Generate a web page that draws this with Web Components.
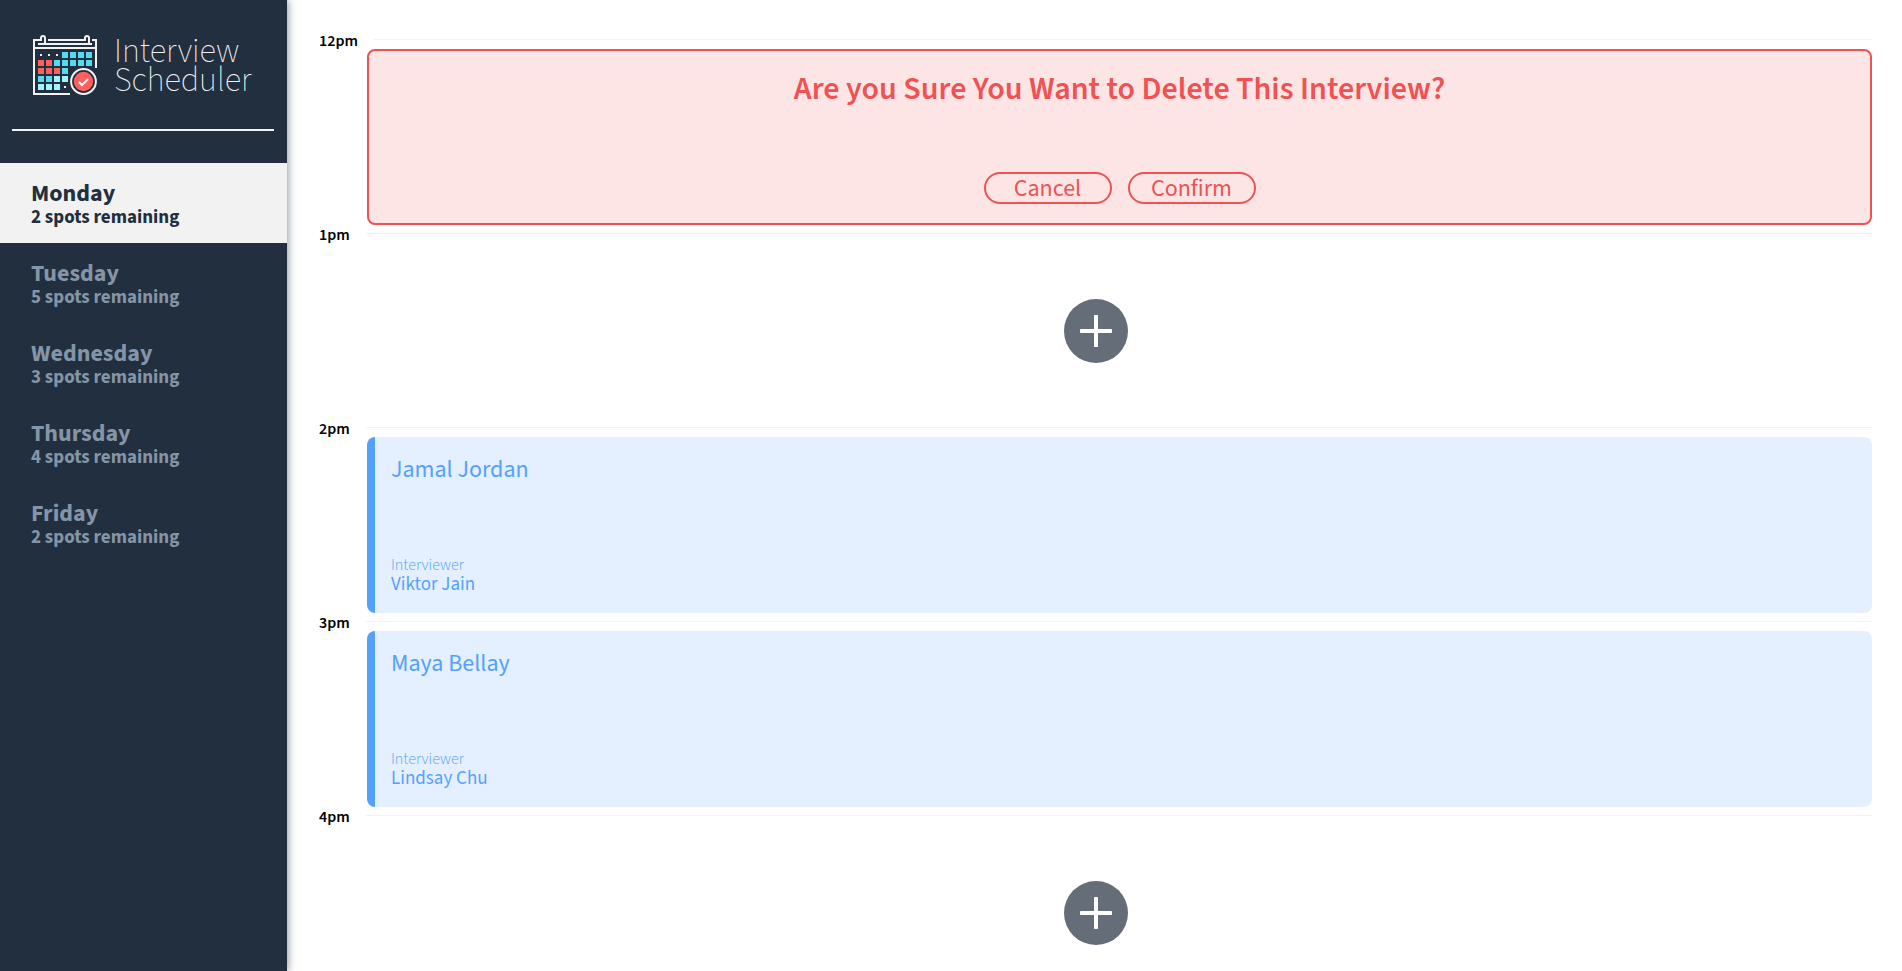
<!DOCTYPE html>
<html lang="en">
<head>
<meta charset="utf-8">
<title>Interview Scheduler</title>
<style>
body {
  margin: 0;
  background: #fff;
  color: #000;
  font-family: "Source Sans 3", "Noto Sans CJK SC", "Noto Sans", sans-serif;
  font-size: 16px;
}
</style>
</head>
<body>
<scheduler-app>
  <scheduler-sidebar slot="sidebar">
    <scheduler-logo slot="logo"></scheduler-logo>
    <day-item spots="2" selected>Monday</day-item>
    <day-item spots="5">Tuesday</day-item>
    <day-item spots="3">Wednesday</day-item>
    <day-item spots="4">Thursday</day-item>
    <day-item spots="2">Friday</day-item>
  </scheduler-sidebar>
  <appointment-slot time="12pm"><confirm-card>Are you Sure You Want to Delete This Interview?</confirm-card></appointment-slot>
  <appointment-slot time="1pm"><empty-slot></empty-slot></appointment-slot>
  <appointment-slot time="2pm"><interview-card interviewer="Viktor Jain">Jamal Jordan</interview-card></appointment-slot>
  <appointment-slot time="3pm"><interview-card interviewer="Lindsay Chu">Maya Bellay</interview-card></appointment-slot>
  <appointment-slot time="4pm"><empty-slot></empty-slot></appointment-slot>
</scheduler-app>

<script>
function define(name, render) {
  customElements.define(name, class extends HTMLElement {
    constructor() {
      super();
      this.attachShadow({ mode: 'open' });
    }
    connectedCallback() {
      this.shadowRoot.innerHTML = '<style>*{box-sizing:border-box}</style>' + render(this);
    }
  });
}

define('scheduler-app', () => `
  <style>
    :host { display: flex; height: 100vh; overflow: hidden; }
    main {
      flex: 1;
      min-width: 0;
      padding: 31px 30px 0 32px;
      overflow-y: auto;
      scrollbar-width: none;
    }
  </style>
  <slot name="sidebar"></slot>
  <main><slot></slot></main>`);

define('scheduler-sidebar', () => `
  <style>
    :host {
      display: block;
      flex: none;
      width: 287px;
      background: #222f3e;
      box-shadow: 1px 0 8px rgba(34, 47, 62, .5);
      z-index: 1;
    }
    hr { margin: 0 13px 32px 12px; border: 0; height: 2px; background: #f2f2f2; }
  </style>
  <slot name="logo"></slot>
  <hr>
  <nav><slot></slot></nav>`);

/* Calendar squares, one string per week: c cyan, p pale, r red, . dot */
const WEEKS = ['...cccc', 'rrccccc', 'rrrc', 'ccpp', 'ppp.'];
const FILL = { c: '#54dbf0', p: '#a5f2ff', r: '#ff5f5d' };
const squares = WEEKS.map((week, row) => [...week].map((k, col) => {
  const x = 6 + col * 8, y = 18 + row * 8;
  return k === '.'
    ? `<rect x="${x + 2}" y="${y + 2}" width="2" height="2" fill="#f2f2f2"/>`
    : `<rect x="${x}" y="${y}" width="6" height="6" fill="${FILL[k]}"/>`;
}).join('')).join('');

define('scheduler-logo', () => `
  <style>
    :host {
      display: flex;
      align-items: flex-start;
      gap: 16px;
      padding: 34px 32px 32px;
      color: #f2f2f2;
    }
    svg { flex: none; display: block; }
    div { padding-top: 3px; font-size: 34px; font-weight: 200; line-height: 29px; }
    span { display: block; }
  </style>
  <svg width="66" height="63" viewBox="0 0 66 63" aria-hidden="true">
    <g fill="none" stroke="#f2f2f2" stroke-width="2">
      <path d="M9 6H2V60H38M16 6H52M60 6H64V34M6 10H60M1 14H65"/>
      <path d="M9 7V4a2 2 0 0 1 4 0V9M53 7V4a2 2 0 0 1 4 0V9"/>
      <circle cx="51.5" cy="47.5" r="12.4"/>
    </g>
    ${squares}
    <circle cx="51.5" cy="47.5" r="9.7" fill="#ff5f5d"/>
    <path d="M47 48l3 3 6-6" fill="none" stroke="#fff" stroke-width="2"/>
  </svg>
  <div><span>Interview</span><span>Scheduler</span></div>`);

define('day-item', el => `
  <style>
    :host { display: block; }
    button {
      display: block;
      width: 100%;
      height: 80px;
      padding: 19px 31px 13px;
      border: 0;
      background: none;
      color: #8395a7;
      font: inherit;
      text-align: left;
      cursor: pointer;
    }
    :host([selected]) button { background: #f2f2f2; color: #222f3e; }
    .day, .spots { display: block; font-weight: 700; line-height: 24px; }
    .day { font-size: 24px; }
    .spots { font-size: 19px; }
  </style>
  <button type="button"><span class="day"><slot></slot></span><span class="spots">${el.getAttribute('spots')} spots remaining</span></button>`);

define('appointment-slot', el => `
  <style>
    :host { display: block; }
    header { display: flex; align-items: flex-start; gap: 16px; height: 18px; }
    h4 { margin: 0; font-size: 16px; font-weight: 600; line-height: 20px; }
    hr { flex: 1; margin: 8px 0 0; border: 0; height: 1px; background: #f2f2f2; }
  </style>
  <header><h4>${el.getAttribute('time')}</h4><hr></header>
  <slot></slot>`);

define('confirm-card', () => `
  <style>
    :host {
      display: flex;
      flex-direction: column;
      align-items: center;
      justify-content: space-between;
      min-height: 176px;
      margin-left: 48px;
      padding: 19px 24px;
      box-sizing: border-box;
      border: 2px solid #ee5253;
      border-radius: 8px;
      background: #fde5e5;
      color: #ee5253;
    }
    h1 { margin: 0; font-size: 32px; font-weight: 600; line-height: 38px; text-align: center; }
    div { display: flex; gap: 16px; }
    button {
      width: 128px;
      height: 32px;
      padding: 2px 0 0;
      border: 2px solid #ee5253;
      border-radius: 16px;
      background: none;
      color: inherit;
      font: inherit;
      font-size: 24px;
      line-height: 26px;
      cursor: pointer;
    }
  </style>
  <h1><slot></slot></h1>
  <div><button type="button">Cancel</button><button type="button">Confirm</button></div>`);

define('empty-slot', () => `
  <style>
    :host { display: flex; align-items: center; justify-content: center; min-height: 176px; }
    button {
      width: 64px;
      height: 64px;
      padding: 0;
      border: 0;
      border-radius: 50%;
      background: #656d78;
      cursor: pointer;
    }
    svg { display: block; }
  </style>
  <button type="button" aria-label="Add">
    <svg width="64" height="64" viewBox="0 0 64 64" fill="#fff" aria-hidden="true">
      <rect x="16" y="30" width="32" height="4" rx=".8"/><rect x="30" y="16" width="4" height="32" rx=".8"/>
    </svg>
  </button>`);

define('interview-card', el => `
  <style>
    :host {
      display: flex;
      flex-direction: column;
      justify-content: space-between;
      min-height: 176px;
      margin-left: 48px;
      padding: 16px 16px 18px;
      box-sizing: border-box;
      border-left: 8px solid #54a0ff;
      border-radius: 8px;
      background: #e4f0ff;
      color: #54a0ff;
    }
    h2, h3, h4 { margin: 0; font-weight: 400; }
    h2 { font-size: 24px; line-height: 34px; }
    h4 { font-size: 16px; font-weight: 300; line-height: 20px; }
    h3 { font-size: 19px; line-height: 20px; }
  </style>
  <h2><slot></slot></h2>
  <section><h4>Interviewer</h4><h3>${el.getAttribute('interviewer')}</h3></section>`);
</script>
</body>
</html>
